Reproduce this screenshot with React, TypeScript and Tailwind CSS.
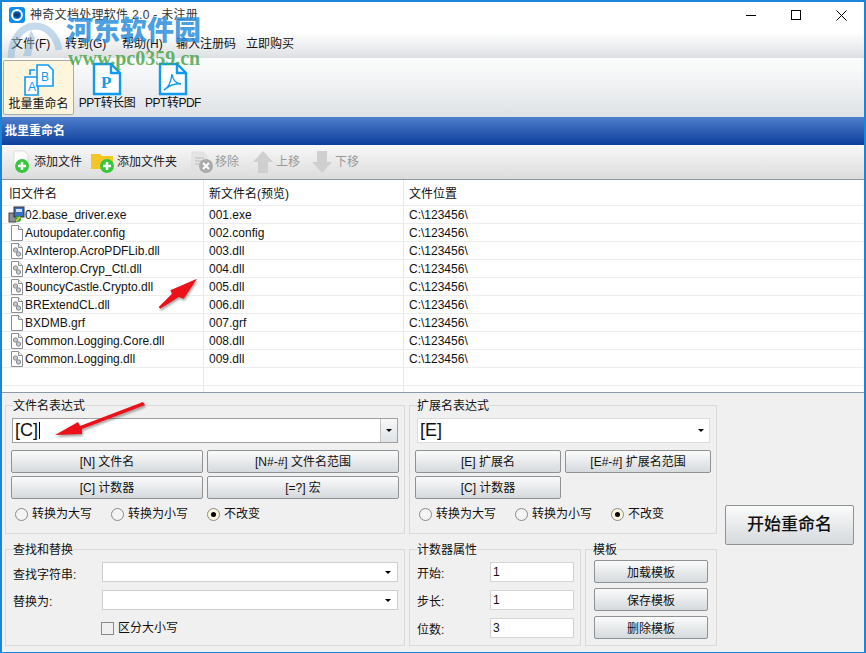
const CJK = "font-['Liberation_Sans','Noto_Sans_CJK_SC',sans-serif]";

const rows = [
	["02.base_driver.exe", "001.exe", "exe"],
	["Autoupdater.config", "002.config", "file"],
	["AxInterop.AcroPDFLib.dll", "003.dll", "dll"],
	["AxInterop.Cryp_Ctl.dll", "004.dll", "dll"],
	["BouncyCastle.Crypto.dll", "005.dll", "dll"],
	["BRExtendCL.dll", "006.dll", "dll"],
	["BXDMB.grf", "007.grf", "file"],
	["Common.Logging.Core.dll", "008.dll", "dll"],
	["Common.Logging.dll", "009.dll", "dll"],
	["", "", ""],
	["", "", ""],
];

function FileIcon({ kind }: { kind: string }) {
	if (kind === "exe") {
		return (
			<svg width="18" height="18" viewBox="0 0 18 18">
				<rect x="1" y="7" width="7" height="9" fill="#8a8f98" stroke="#444" />
				<rect x="6" y="1" width="10" height="10" fill="#3b6fc4" stroke="#333" />
				<rect x="8" y="3" width="6" height="3" fill="#cfe0f5" />
				<circle cx="10" cy="13" r="3" fill="#3aa53a" />
				<path d="M8 15l4-4" stroke="#e8d040" strokeWidth="1.5" />
			</svg>
		);
	}
	return (
		<svg width="18" height="18" viewBox="0 0 18 18">
			<path d="M3.5 1.5h7l4 4v11h-11z" fill="#fff" stroke="#8b8f94" />
			<path d="M10.5 1.5v4h4" fill="#eee" stroke="#8b8f94" />
			{kind === "dll" && (
				<g fill="#c5c9ce" stroke="#70757b" strokeWidth="0.8">
					<circle cx="7.5" cy="8" r="2.2" />
					<circle cx="10.5" cy="12" r="2.2" />
				</g>
			)}
		</svg>
	);
}

function GreenPlus({ x, y }: { x: number; y: number }) {
	return (
		<g>
			<circle cx={x} cy={y} r="7" fill="#36c73f" />
			<path d={`M${x - 4} ${y}h8M${x} ${y - 4}v8`} stroke="#fff" strokeWidth="2.4" />
		</g>
	);
}

function ToolItem({ label, disabled, icon, w }: { label: string; disabled?: boolean; icon: React.ReactNode; w: string }) {
	return (
		<div className={`flex items-center ${w} ${disabled ? "text-[#9a9a9a]" : "text-[#222]"}`}>
			{icon}
			<span className="ml-[1px]">{label}</span>
		</div>
	);
}

function Btn({ children, className = "" }: { children: React.ReactNode; className?: string }) {
	return (
		<button className={`h-[23px] flex items-center justify-center rounded-[2px] border border-[#8f9295] bg-gradient-to-b from-[#fbfbfb] to-[#d5dadd] text-[12px] text-[#111] ${className}`}>
			{children}
		</button>
	);
}

function Radio({ label, checked, w }: { label: string; checked?: boolean; w: string }) {
	return (
		<div className={`flex items-center ${w}`}>
			<span className={`w-[13px] h-[13px] rounded-full border border-[#8a8a8a] flex items-center justify-center ${checked ? "bg-[#fdf6dc]" : "bg-[#f4f4f4]"}`}>
				{checked && <span className="w-[5px] h-[5px] rounded-full bg-black" />}
			</span>
			<span className="ml-[4px] text-[12px] text-[#111]">{label}</span>
		</div>
	);
}

function Caret() {
	return <span className="w-0 h-0 border-x-[3px] border-x-transparent border-t-[3px] border-t-black" />;
}

function Group({ title, className, pad, children }: { title: string; className: string; pad: string; children: React.ReactNode }) {
	return (
		<fieldset className={`border border-[#d9d9d9] ${className}`}>
			<legend className="ml-[7px] h-[16px] leading-[18px] text-[12px] text-[#111]">{title}</legend>
			<div className={pad}>{children}</div>
		</fieldset>
	);
}

function SmallCombo() {
	return (
		<div className="w-[296px] h-[20px] bg-white border border-[#cfcfcf] flex items-center justify-end pr-[6px]">
			<Caret />
		</div>
	);
}

function NumField({ label, value }: { label: string; value: string }) {
	return (
		<div className="flex items-center h-[20px]">
			<span className="w-[73px] pt-[4px] text-[12px] text-[#111]">{label}</span>
			<div className="w-[84px] h-[20px] bg-white border border-[#d4d4d4] pl-[2px] text-[12px] leading-[18px] text-[#111]">{value}</div>
		</div>
	);
}

function Ribbon({ label, active, icon, w }: { label: string; active?: boolean; icon: React.ReactNode; w: string }) {
	return (
		<div className={`${w} h-[55px] flex flex-col items-center rounded-[2px] ${active ? "bg-[#fdf6dc] border border-[#a9a9a9]" : "tracking-[-0.5px]"}`}>
			<div className="h-[34px] mt-[2px] flex items-center">{icon}</div>
			<span className="text-[12px] leading-[14px] text-[#111] whitespace-nowrap">{label}</span>
		</div>
	);
}

function DocIcon({ children }: { children: React.ReactNode }) {
	return (
		<svg width="30" height="34" viewBox="0 0 30 34" fill="none">
			<path d="M2 2h17l9 9v21H2z" fill="#fff" stroke="#0f9bf0" strokeWidth="2.4" />
			<path d="M19 2v9h9" stroke="#0f9bf0" strokeWidth="2.4" />
			{children}
		</svg>
	);
}

export default function App() {
	return (
		<div className={`relative w-[866px] h-[653px] overflow-hidden bg-[#f0f0f0] border-x-2 border-t-2 border-b border-[#1b86d8] ${CJK}`}>
			{/* title + menu */}
			<div className="h-[56px] -mx-[2px] px-[2px] bg-[linear-gradient(#fff_0,#fff_30px,#dde0e3_100%)]">
				<div className="h-[26px] flex items-center">
					<svg className="ml-[7px]" width="16" height="16" viewBox="0 0 16 16">
						<rect width="16" height="16" rx="3" fill="#0f8be8" />
						<circle cx="8" cy="8" r="5" fill="none" stroke="#fff" strokeWidth="1.8" />
						<rect x="5" y="5" width="6" height="6" rx="3" fill="#123d78" />
					</svg>
					<span className="ml-[5px] text-[12px] tracking-[0.3px] text-[#333]">神奇文档处理软件 2.0 - 未注册</span>
					<div className="ml-auto flex items-center mr-[17px] gap-[35px]">
						<span className="w-[10px] h-[1px] bg-black" />
						<span className="w-[10px] h-[10px] border border-black" />
						<svg width="11" height="11" viewBox="0 0 11 11"><path d="M.5.5l10 10M10.5.5l-10 10" stroke="#000" /></svg>
					</div>
				</div>
				<div className="h-[30px] flex items-center text-[12px] text-[#111] pt-[2px]">
					<span className="ml-[9px] w-[54px]">文件(F)</span>
					<span className="w-[57px]">转到(G)</span>
					<span className="w-[54px]">帮助(H)</span>
					<span className="w-[70px]">输入注册码</span>
					<span>立即购买</span>
				</div>
			</div>

			{/* ribbon */}
			<div className="h-[59px] -mx-[2px] px-[3px] pt-[2px] flex gap-[2px] bg-gradient-to-b from-[#fdfdfd] to-[#dfe3e6]">
				<Ribbon label="批量重命名" active w="w-[71px]" icon={
					<svg width="30" height="32" viewBox="0 0 30 32" fill="none" stroke="#0f9bf0" strokeWidth="1.6">
						<path d="M1 13h13v18H1z" fill="#fff" />
						<path d="M13 1h11l5 5v16H13z" fill="#fff" />
						<path d="M6 11V6h5" />
						<text x="4" y="27" fontSize="12" fill="#0f9bf0" stroke="none">A</text>
						<text x="17" y="17" fontSize="12" fill="#0f9bf0" stroke="none">B</text>
					</svg>
				} />
				<Ribbon label="PPT转长图" w="w-[62px]" icon={
					<DocIcon><text x="9" y="26" fontSize="17" fontWeight="700" fontFamily="Liberation Serif" fill="#0f9bf0">P</text></DocIcon>
				} />
				<Ribbon label="PPT转PDF" w="w-[62px] ml-[2px]" icon={
					<DocIcon><path d="M6 28c4-2 7-8 8-16 1 6 3 9 9 10-6-1-11 1-17 6z" stroke="#0f9bf0" strokeWidth="1.4" /></DocIcon>
				} />
			</div>

			{/* page header */}
			<div className="h-[28px] -ml-[1px] flex items-center pl-[4px] bg-gradient-to-b from-[#4f7fcb] to-[#0b3d9d] text-[12px] font-bold text-white">
				批里重命名
			</div>

			{/* list toolbar */}
			<div className="h-[34px] flex items-center pl-[11px] text-[12px] bg-gradient-to-b from-[#f8f8f8] to-[#dcdcdc]">
				<ToolItem label="添加文件" w="w-[77px]" icon={
					<svg width="20" height="24" viewBox="0 0 20 24"><path d="M1 1h10l4 4v14H1z" fill="#fff" stroke="#ddd" /><GreenPlus x={9} y={16} /></svg>
				} />
				<ToolItem label="添加文件夹" w="w-[100px]" icon={
					<svg width="26" height="24" viewBox="0 0 26 24"><path d="M1 4h9l2 2h11v13H1z" fill="#f6c627" /><GreenPlus x={17} y={16} /></svg>
				} />
				<ToolItem label="移除" disabled w="w-[61px]" icon={
					<svg width="24" height="24" viewBox="0 0 24 24"><path d="M2 2h11l4 4v14H2z" fill="#e4e4e4" stroke="#ddd" /><path d="M5 8h9M5 11h9M5 14h6" stroke="#bbb" /><circle cx="16" cy="16" r="7" fill="#aaa" /><path d="M13 13l6 6M19 13l-6 6" stroke="#fff" strokeWidth="2" /></svg>
				} />
				<ToolItem label="上移" disabled w="w-[59px]" icon={
					<svg width="24" height="24" viewBox="0 0 24 24"><path d="M12 1l10 11h-5v11H7V12H2z" fill="#cfcfcf" /></svg>
				} />
				<ToolItem label="下移" disabled w="w-[60px]" icon={
					<svg width="24" height="24" viewBox="0 0 24 24"><path d="M12 23L2 12h5V1h10v11h5z" fill="#cfcfcf" /></svg>
				} />
			</div>

			{/* file list */}
			<div className="h-[214px] overflow-hidden bg-white border-y border-[#8a9aa8] text-[12px] text-[#111]">
				<div className="h-[25px] flex items-center">
					<span className="w-[202px] pl-[7px] pt-[3px] h-full flex items-center border-r border-[#e8e8e8]">旧文件名</span>
					<span className="w-[200px] pl-[5px] pt-[3px] h-full flex items-center border-r border-[#e8e8e8]">新文件名(预览)</span>
					<span className="pl-[5px] pt-[3px]">文件位置</span>
				</div>
				{rows.map((row, index) => (
					<div key={index} className="h-[18px] flex items-center border-t border-[#ececec]">
						<div className="w-[202px] h-full flex items-center pl-[6px] border-r border-[#e8e8e8]">
							<span className="w-[17px] shrink-0">{row[2] && <FileIcon kind={row[2]} />}</span>
							<span>{row[0]}</span>
						</div>
						<div className="w-[200px] h-full flex items-center pl-[5px] border-r border-[#e8e8e8]">{row[1]}</div>
						<div className="pl-[5px]">{row[0] && "C:\\123456\\"}</div>
					</div>
				))}
			</div>

			{/* expression + options */}
			<div className="flex pl-[3px] pt-[4px]">
				<div className="w-[712px] shrink-0">
					<div className="flex gap-[4px]">
						<Group title="文件名表达式" className="w-[400px] h-[137px]" pad="pl-[6px]">
							<div className="w-[386px] h-[25px] mt-[5px] bg-white border border-[#a0a0a0] flex items-center text-[18px] text-[#111]">
								<span className="pl-[2px] flex-1 flex items-center">[C]<span className="w-[1px] h-[17px] bg-black ml-[1px]" /></span>
								<span className="w-[17px] h-full flex items-center justify-center border-l border-[#c5c5c5] bg-gradient-to-b from-[#f8f8f8] to-[#dfe3e6]"><Caret /></span>
							</div>
							<div className="grid grid-cols-[192px_192px] gap-x-[4px] gap-y-[3px] mt-[7px] -ml-[1px]">
								<Btn>[N] 文件名</Btn>
								<Btn>[N#-#] 文件名范围</Btn>
								<Btn>[C] 计数器</Btn>
								<Btn>[=?] 宏</Btn>
							</div>
							<div className="flex h-[16px] mt-[7px] ml-[3px]">
								<Radio label="转换为大写" w="w-[96px]" />
								<Radio label="转换为小写" w="w-[96px]" />
								<Radio label="不改变" checked w="w-[80px]" />
							</div>
						</Group>
						<Group title="扩展名表达式" className="w-[308px] h-[137px]" pad="pl-[5px]">
							<div className="w-[293px] ml-[2px] h-[25px] mt-[5px] bg-white border border-[#dcdcdc] flex items-center text-[18px] text-[#111]">
								<span className="pl-[2px] flex-1">[E]</span>
								<span className="w-[17px] flex justify-center"><Caret /></span>
							</div>
							<div className="grid grid-cols-[146px_146px] gap-x-[4px] gap-y-[3px] mt-[7px]">
								<Btn>[E] 扩展名</Btn>
								<Btn>[E#-#] 扩展名范围</Btn>
								<Btn>[C] 计数器</Btn>
							</div>
							<div className="flex h-[16px] mt-[7px] ml-[4px]">
								<Radio label="转换为大写" w="w-[96px]" />
								<Radio label="转换为小写" w="w-[96px]" />
								<Radio label="不改变" checked w="w-[80px]" />
							</div>
						</Group>
					</div>
					<div className="flex gap-[4px] mt-[7px]">
						<Group title="查找和替换" className="w-[400px] h-[105px]" pad="pl-[7px]">
							<div className="flex items-center mt-[5px] h-[20px] text-[12px] text-[#111]">
								<span className="w-[89px] pt-[6px]">查找字符串:</span>
								<SmallCombo />
							</div>
							<div className="flex items-center mt-[8px] h-[20px] text-[12px] text-[#111]">
								<span className="w-[89px] pt-[4px]">替换为:</span>
								<SmallCombo />
							</div>
							<div className="flex items-center mt-[9px] ml-[88px] text-[12px] text-[#111]">
								<span className="w-[13px] h-[13px] border border-[#8a8a8a]" />
								<span className="ml-[4px]">区分大小写</span>
							</div>
						</Group>
						<Group title="计数器属性" className="w-[172px] h-[105px]" pad="pl-[7px]">
							<div className="flex flex-col gap-[8px] mt-[5px]">
								<NumField label="开始:" value="1" />
								<NumField label="步长:" value="1" />
								<NumField label="位数:" value="3" />
							</div>
						</Group>
						<Group title="模板" className="w-[132px] h-[105px]" pad="pl-[8px]">
							<div className="flex flex-col gap-[5px] mt-[3px]">
								<Btn className="w-[114px] pt-[2px]">加载模板</Btn>
								<Btn className="w-[114px] pt-[2px]">保存模板</Btn>
								<Btn className="w-[114px] pt-[2px]">删除模板</Btn>
							</div>
						</Group>
					</div>
				</div>
				<div className="pl-[8px] pt-[108px]">
					<button className="w-[129px] h-[40px] rounded-[2px] border border-[#8f9295] bg-gradient-to-b from-[#fbfbfb] to-[#d5dadd] text-[17px] font-medium text-[#111]">开始重命名</button>
				</div>
			</div>

			{/* watermark and annotations, drawn over the window */}
			<div className="absolute left-[64px] top-[11px] text-[27px] leading-[32px] font-black text-[#2b8fdc]/85 font-['Noto_Sans_CJK_SC',sans-serif] whitespace-nowrap">河东软件园</div>
			<div className="absolute left-[66px] top-[45px] text-[20px] leading-[22px] font-bold text-[#4ca64c]/85 font-['Liberation_Serif',serif] whitespace-nowrap">www.pc0359.cn</div>
			<svg className="absolute left-[5px] top-[20px] opacity-50" width="56" height="38" viewBox="0 0 56 38" fill="none">
				<path d="M4 36C4 16 16 4 28 4c12 0 22 10 24 24" stroke="#8ab4d8" strokeWidth="7" />
				<path d="M24 8l-8 26h8l4-18z" fill="#8ab4d8" />
			</svg>
			<svg className="absolute left-[148px] top-[268px] drop-shadow-[1px_2px_1px_rgba(0,0,0,0.35)]" width="52" height="44" viewBox="0 0 52 44">
				<path d="M8.7 37L22 23.7l-1.7-3.4L47 8.7 33.7 28.7 28.7 27 10.3 38.7z" fill="#ec1018" />
			</svg>
			<svg className="absolute left-[48px] top-[396px] drop-shadow-[1px_2px_1px_rgba(0,0,0,0.35)]" width="100" height="44" viewBox="0 0 100 44">
				<path d="M5 37L28 24l2 4L93 4l2 3L32 31v5z" fill="#ec1018" />
			</svg>
		</div>
	);
}
